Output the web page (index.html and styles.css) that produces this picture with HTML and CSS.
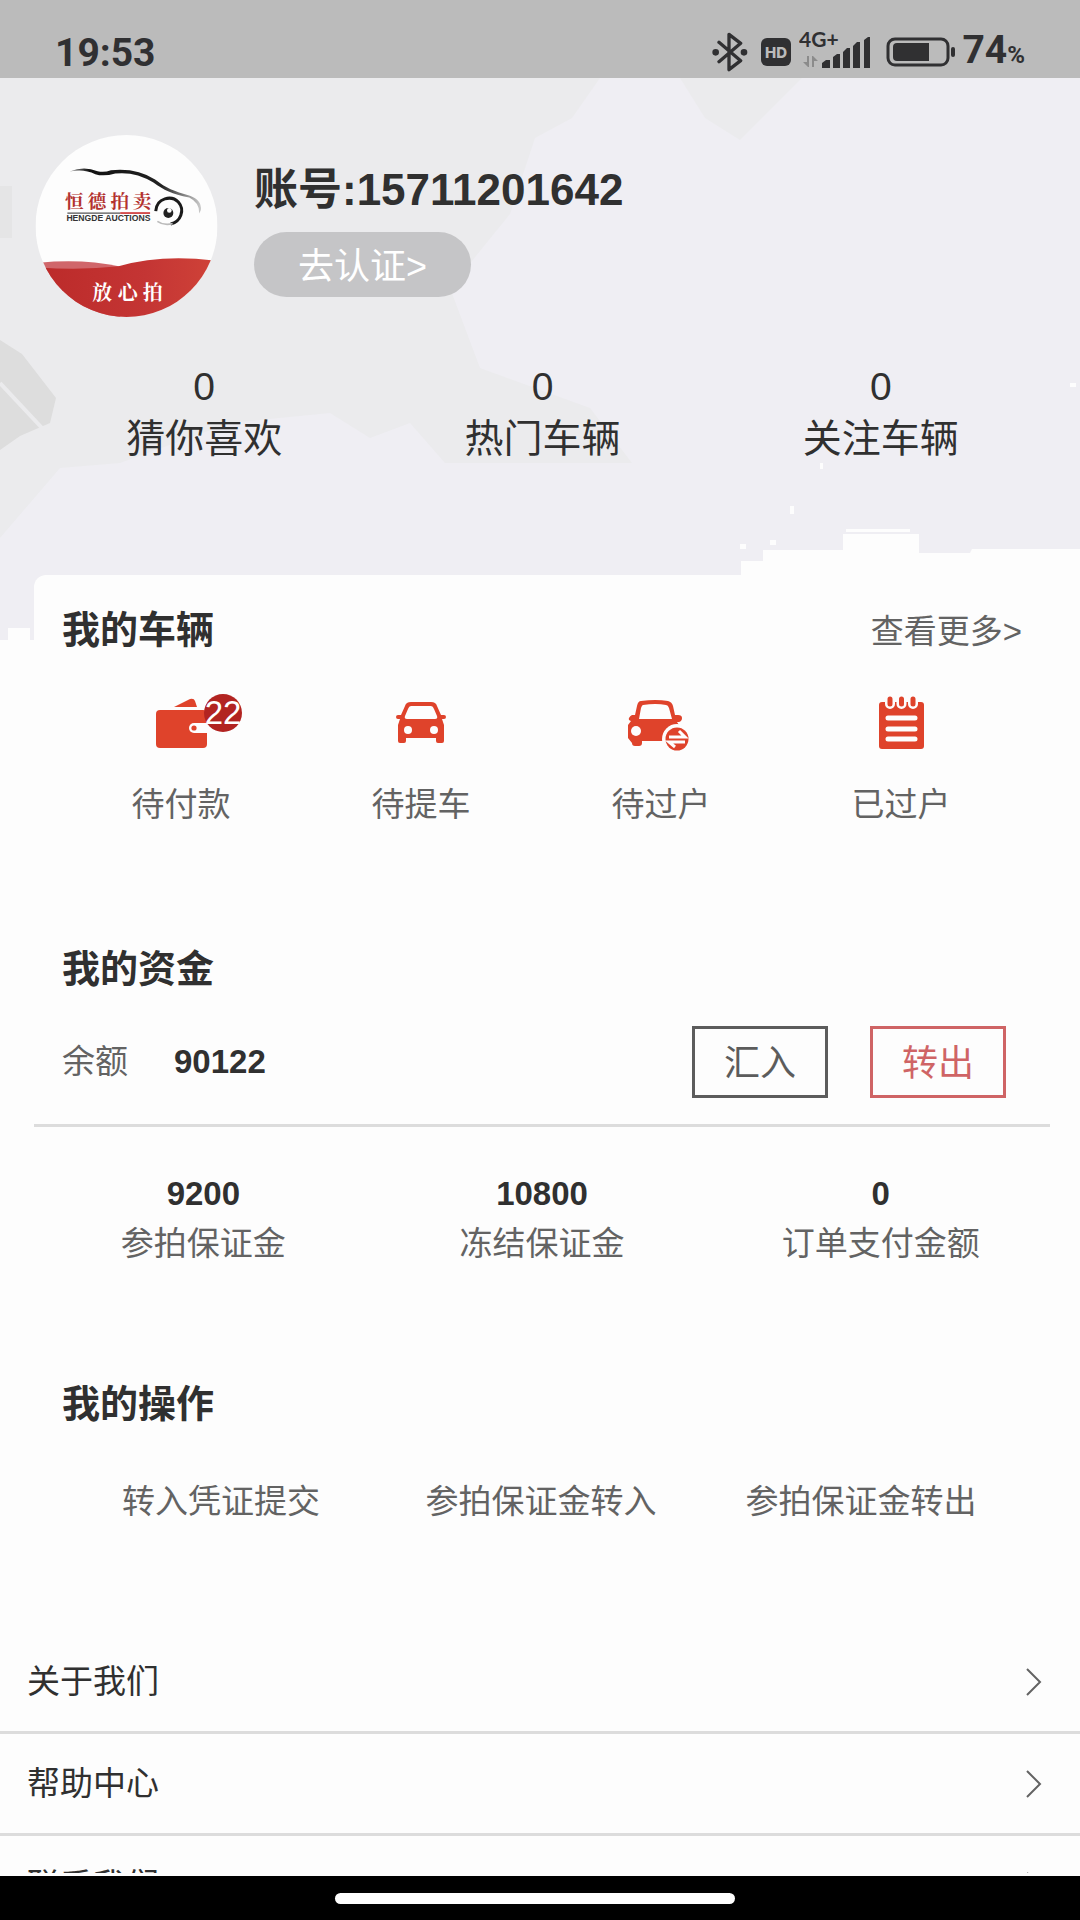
FILE: index.html
```html
<!DOCTYPE html>
<html lang="zh-CN">
<head>
    <meta charset="UTF-8">
    <meta name="viewport" content="width=device-width, initial-scale=1.0">
    <title>个人中心</title>
    <link rel="stylesheet" href="styles.css">
</head>
<body>
    <!-- 状态栏 -->
    <header class="status-bar">
        <span class="time">19:53</span>
        <div class="status-icons">
            <svg width="36" height="40" viewBox="105 95 108 120" fill="none" stroke="#303032" stroke-width="10" stroke-linejoin="round" stroke-linecap="round">
                <path d="M126 126 L191 181 L156 208 V102 L191 129 L126 184"/>
                <circle cx="116" cy="156" r="5" fill="#303032"/>
                <circle cx="201" cy="156" r="5" fill="#303032"/>
            </svg>
            <svg class="hd" width="30" height="28" viewBox="0 0 30 28">
                <rect width="30" height="28" rx="6" fill="#303032"/>
                <text x="15" y="20" text-anchor="middle" class="hd-text">HD</text>
            </svg>
            <svg class="signal" width="74" height="44" viewBox="0 -6 74 44">
                <text x="0" y="16" class="net-text">4G+</text>
                <g fill="#303032">
                    <path d="M23 37v-5l4-3h4v8zM34 37V26l4-3h3v14zM44 37V21l4-4h3v20zM54 37V15l4-4h3v26zM65 37V9l4-3h2v31z"/>
                </g>
                <path d="M4 31h4v-6h2v11H9zM19 30h-4v6h-2V25h1z" fill="#8b8b8b"/>
            </svg>
            <svg class="battery" width="70" height="30" viewBox="0 0 70 30">
                <rect x="2" y="2" width="60" height="26" rx="7" fill="none" stroke="#303032" stroke-width="3"/>
                <path d="M11 6h32v18H11q-4 0-4-4V10q0-4 4-4z" fill="#303032"/>
                <rect x="65" y="10" width="4" height="10" rx="2" fill="#303032"/>
            </svg>
            <span class="percent">74<small>%</small></span>
        </div>
    </header>

    <main class="page">
        <section class="hero">
            <svg class="hero-bg" viewBox="0 0 1080 562" preserveAspectRatio="none">
                <path d="M0 0H1080V471H972L970 475H919V463H919V456H843V472H763V483H741V497L747 562H30V550H8V562H0z" fill="#efeef3"/>
                <path d="M0 0H600L572 40 535 60 510 136 450 210 480 290 590 330 632 385 445 385 410 345 370 360 330 335 230 345 120 385 60 390 0 460z" fill="#ebebed"/>
                <path d="M680 0H802L740 62 705 40z" fill="#ebebed"/>
                <path d="M0 262L22 276 56 320 50 345 20 358 0 372z" fill="#dddddd"/>
                <path d="M0 305L42 350" stroke="#ebebed" stroke-width="4"/>
                <path d="M0 108H12V160H0z" fill="#e5e5e6"/>
                <path d="M846 451H910v3H846zM740 466h6v5h-6zM820 385h3v6h-3zM1070 305h6v4h-6zM770 462h6v5h-6zM790 428h4v8h-4z" fill="#fdfdfd"/>
            </svg>
            <div class="profile">
                <svg class="avatar" viewBox="45 44 548 548" role="img" aria-label="恒德拍卖">
                    <defs>
                        <clipPath id="circle"><circle cx="319" cy="318" r="274"/></clipPath>
                        <linearGradient id="red" x1="0" x2="1" y1="0" y2="0">
                            <stop offset="0" stop-color="#bb2a29"/>
                            <stop offset="0.6" stop-color="#c43534"/>
                            <stop offset="1" stop-color="#d04338"/>
                        </linearGradient>
                        <linearGradient id="roof" x1="0" x2="1" y1="0" y2="0">
                            <stop offset="0" stop-color="#999"/>
                            <stop offset="0.15" stop-color="#111"/>
                            <stop offset="0.7" stop-color="#222"/>
                            <stop offset="1" stop-color="#ccc"/>
                        </linearGradient>
                    </defs>
                    <g clip-path="url(#circle)">
                        <rect x="45" y="44" width="548" height="548" fill="#fdfdfd"/>
                        <path d="M45 430Q180 415 300 440L300 600H45z" fill="#d0666a"/>
                        <path d="M45 442Q180 452 295 439Q430 400 600 424V600H45z" fill="url(#red)"/>
                    </g>
                    <path d="M148 154Q190 136 232 153Q252 158 272 150Q350 142 405 178C440 205 460 212 510 227Q546 240 543 270L538 280Q540 248 508 232C455 222 432 210 400 187Q345 153 285 160Q250 170 225 162Q190 145 148 154z" fill="url(#roof)"/>
                    <path d="M407 273C410 232 455 225 475 246C496 270 482 305 452 312" fill="none" stroke="#1a1a1a" stroke-width="9"/>
                    <path d="M412 304Q432 318 458 311" fill="none" stroke="#bbb" stroke-width="5"/>
                    <circle cx="445" cy="279" r="15" fill="#222"/>
                    <circle cx="448" cy="271" r="7" fill="#fff"/>
                    <text class="logo-name" x="134 202 271 338" y="264">恒德拍卖</text>
                    <path d="M141 279H300" stroke="#555" stroke-width="4"/>
                    <path d="M300 279H390" stroke="#c33" stroke-width="5"/>
                    <text class="logo-en" x="138" y="304">HENGDE AUCTIONS</text>
                    <text class="logo-slogan" x="216 293 368" y="540">放心拍</text>
                </svg>
                <div class="info">
                    <h1>账号:15711201642</h1>
                    <button class="verify" type="button">去认证&gt;</button>
                </div>
            </div>
            <div class="stats">
                <div><span>0</span><span>猜你喜欢</span></div>
                <div><span>0</span><span>热门车辆</span></div>
                <div><span>0</span><span>关注车辆</span></div>
            </div>
        </section>

        <!-- 我的车辆 -->
        <section class="card">
            <div class="card-head">
                <h2>我的车辆</h2>
                <a href="#" class="more">查看更多&gt;</a>
            </div>
            <div class="grid four">
                <a href="#" class="item">
                    <span class="icon">
                        <svg viewBox="0 0 64 64">
                            <path d="M25 15L41 7q4-1 5 2l2 6z" fill="#df432b"/>
                            <rect x="7" y="18" width="51" height="38" rx="4" fill="#df432b"/>
                            <path d="M60 31H45a5 5 0 0 0 0 10h15z" fill="#fdfdfd"/>
                            <circle cx="45" cy="36" r="2.6" fill="#df432b"/>
                        </svg>
                        <b class="badge">22</b>
                    </span>
                    <span>待付款</span>
                </a>
                <a href="#" class="item">
                    <span class="icon">
                        <svg viewBox="0 0 64 64">
                            <path d="M22 10H42q5 0 6 4l4 9h3q2 0 2 2t-2 2h-2l2 6V49q0 2-2 2h-4q-2 0-2-2v-3H17v3q0 2-2 2h-4q-2 0-2-2V33l2-6H9q-2 0-2-2t2-2h3l4-9q1-4 6-4z" fill="#df432b"/>
                            <path d="M22 14H42q2 0 3 3l3 7q1 3-2 3H18q-3 0-2-3l3-7q1-3 3-3z" fill="#fdfdfd"/>
                            <circle cx="19" cy="38" r="4" fill="#fdfdfd"/>
                            <circle cx="45" cy="38" r="4" fill="#fdfdfd"/>
                        </svg>
                    </span>
                    <span>待提车</span>
                </a>
                <a href="#" class="item">
                    <span class="icon">
                        <svg viewBox="0 0 64 64">
                            <path d="M12 9Q27 7 39 9q4 1 5 5l2 9h3q4 0 4 3t-3 4h-2l2 3v16H13v2q0 3-3 3H6q-3 0-3-3l-4-5V33l3-4q-3-1-2-3t3-3h3l2-9q1-5 4-5z" fill="#df432b"/>
                            <path d="M14 13Q27 11 37 13q2 0 3 3l3 11H10l2-11q1-3 2-3z" fill="#fdfdfd"/>
                            <circle cx="7" cy="39" r="5" fill="#fdfdfd"/>
                            <circle cx="48" cy="47" r="15" fill="#fdfdfd"/>
                            <circle cx="48" cy="47" r="11.5" fill="#df432b"/>
                            <path d="M40 45H56L50 39M56 50H40L46 55" fill="none" stroke="#fdfdfd" stroke-width="3"/>
                        </svg>
                    </span>
                    <span>待过户</span>
                </a>
                <a href="#" class="item">
                    <span class="icon">
                        <svg viewBox="0 0 64 64">
                            <rect x="10" y="10" width="45" height="47" rx="3" fill="#df432b"/>
                            <g stroke-linecap="round">
                                <path d="M21 7V12M32.500 7V12M44 7V12" stroke="#fdfdfd" stroke-width="10"/>
                                <path d="M21 7V12M32.500 7V12M44 7V12" stroke="#df432b" stroke-width="5"/>
                                <path d="M19 26H46M19 37H46M19 47H46" stroke="#fdfdfd" stroke-width="5"/>
                            </g>
                        </svg>
                    </span>
                    <span>已过户</span>
                </a>
            </div>
        </section>

        <!-- 我的资金 -->
        <section class="card">
            <div class="card-head">
                <h2>我的资金</h2>
            </div>
            <div class="balance">
                <span>余额</span>
                <strong>90122</strong>
                <div class="actions">
                    <button type="button">汇入</button>
                    <button type="button" class="out">转出</button>
                </div>
            </div>
            <div class="funds">
                <div><strong>9200</strong><span>参拍保证金</span></div>
                <div><strong>10800</strong><span>冻结保证金</span></div>
                <div><strong>0</strong><span>订单支付金额</span></div>
            </div>
        </section>

        <!-- 我的操作 -->
        <section class="card">
            <div class="card-head">
                <h2>我的操作</h2>
            </div>
            <div class="grid three">
                <a href="#">转入凭证提交</a>
                <a href="#">参拍保证金转入</a>
                <a href="#">参拍保证金转出</a>
            </div>
        </section>

        <nav class="menu">
            <a href="#">关于我们
                <svg viewBox="0 0 18 30"><path d="M2 2L15 15 2 28"/></svg>
            </a>
            <a href="#">帮助中心
                <svg viewBox="0 0 18 30"><path d="M2 2L15 15 2 28"/></svg>
            </a>
            <a href="#">联系我们
                <svg viewBox="0 0 18 30"><path d="M2 2L15 15 2 28"/></svg>
            </a>
        </nav>
    </main>

    <footer class="home-bar"><span></span></footer>
</body>
</html>
```
FILE: styles.css
```css
* {
    box-sizing: border-box;
}
body {
    margin: 0;
    height: 100vh;
    display: flex;
    flex-direction: column;
    overflow: hidden;
    background-color: #fdfdfd;
    color: #303030;
    font-family: "Liberation Sans", "Noto Sans CJK SC", sans-serif;
    font-size: 33px;
    line-height: 50px;
}
a {
    color: inherit;
    text-decoration: none;
}
button {
    font-family: inherit;
    cursor: pointer;
}
h1, h2 {
    margin: 0;
}
/* 状态栏 */
.status-bar {
    flex: none;
    height: 78px;
    padding: 26px 55px 0;
    display: flex;
    justify-content: space-between;
    background-color: #bbbbbb;
    color: #303032;
    font-family: Roboto, sans-serif;
    font-weight: bold;
    font-size: 39px;
    line-height: 54px;
}
.status-icons {
    display: flex;
    align-items: center;
    height: 52px;
}
.hd {
    margin-left: 13px;
}
.hd-text {
    font-family: Inter, sans-serif;
    font-size: 15px;
    font-weight: 800;
    fill: #bbbbbb;
}
.signal {
    margin: 0 13px 10px 8px;
}
.net-text {
    font-family: Lato, sans-serif;
    font-size: 21px;
    font-weight: 700;
    fill: #303032;
}
.percent {
    margin-left: 6px;
}
.percent small {
    font-size: 24px;
}
/* 页面 */
.page {
    flex: 1;
    min-height: 0;
    overflow: hidden;
}
.hero {
    position: relative;
    padding: 57px 30px 110px 35px;
}
.hero-bg {
    position: absolute;
    left: 0;
    top: 0;
    width: 100%;
    height: 562px;
}
.profile {
    position: relative;
    display: flex;
    gap: 36px;
}
.avatar {
    width: 183px;
    height: 182px;
}
.logo-name {
    font-family: "Noto Serif CJK SC", "Noto Sans CJK SC", serif;
    font-size: 56px;
    font-weight: bold;
    fill: #b3322f;
}
.logo-en {
    font-size: 26px;
    font-weight: bold;
    fill: #333;
}
.logo-slogan {
    font-family: "Noto Serif CJK SC", "Noto Sans CJK SC", serif;
    font-size: 60px;
    font-weight: bold;
    fill: #fff;
}
.info {
    padding-top: 25px;
}
.info h1 {
    font-size: 44px;
    line-height: 60px;
}
.verify {
    display: block;
    margin-top: 12px;
    padding: 0 44px 4px;
    height: 65px;
    border: none;
    border-radius: 33px;
    background-color: #c5c5c7;
    color: #fff;
    font-size: 36px;
}
.stats {
    position: relative;
    display: flex;
    margin-top: 44px;
    font-size: 39px;
    line-height: 52px;
}
.stats div, .funds div {
    flex: 1;
    display: flex;
    flex-direction: column;
    align-items: center;
}
/* 卡片 */
.card {
    position: relative;
    margin: 0 30px 80px 34px;
    padding-top: 27px;
    border-radius: 12px;
    background-color: #fdfdfd;
    color: #636363;
}
.card-head {
    display: flex;
    justify-content: space-between;
    padding: 0 28px;
    line-height: 56px;
}
.card-head h2 {
    color: #303030;
    font-size: 38px;
}
.more {
    padding-top: 2px;
}
.grid {
    display: grid;
    padding: 0 29px 0 27px;
    text-align: center;
}
.four {
    grid-template-columns: repeat(4, 1fr);
    margin-top: 32px;
    padding-bottom: 4px;
}
.three {
    grid-template-columns: repeat(3, 1fr);
    margin-top: 45px;
}
.item {
    display: flex;
    flex-direction: column;
    align-items: center;
    gap: 24px;
}
.icon {
    position: relative;
    width: 64px;
    height: 64px;
}
.icon svg {
    display: block;
    overflow: visible;
}
.badge {
    position: absolute;
    left: 55px;
    top: 2px;
    width: 38px;
    height: 38px;
    border-radius: 50%;
    background-color: #b22421;
    color: #fff;
    font-weight: normal;
    line-height: 38px;
}
.balance {
    display: flex;
    align-items: center;
    margin-top: 29px;
    padding: 0 44px 26px 28px;
    border-bottom: 3px solid #dcdcdc;
}
.balance strong {
    margin-left: 46px;
}
.actions {
    display: flex;
    gap: 42px;
    margin-left: auto;
}
.actions button {
    width: 136px;
    height: 72px;
    padding: 0 0 4px;
    border: 3px solid #5c5c5c;
    background: none;
    color: #5c5c5c;
    font-size: 36px;
}
.actions .out {
    border-color: #cf6465;
    color: #cf6465;
}
.funds {
    display: flex;
    margin-top: 42px;
}
.card strong {
    color: #303030;
}
/* 菜单 */
.menu {
    margin-top: 105px;
}
.menu a {
    display: flex;
    justify-content: space-between;
    align-items: center;
    height: 102px;
    padding: 0 37px 0 27px;
    border-bottom: 3px solid #dcdcdc;
}
.menu svg {
    width: 18px;
    height: 30px;
    fill: none;
    stroke: #636363;
    stroke-width: 2;
}
.home-bar {
    flex: none;
    height: 47px;
    padding: 17px 10px 0 0;
    border-top: 3px solid #fdfdfd;
    background-color: #000;
}
.home-bar span {
    display: block;
    width: 400px;
    height: 11px;
    margin: 0 auto;
    border-radius: 6px;
    background-color: #fdfdfd;
}
```
